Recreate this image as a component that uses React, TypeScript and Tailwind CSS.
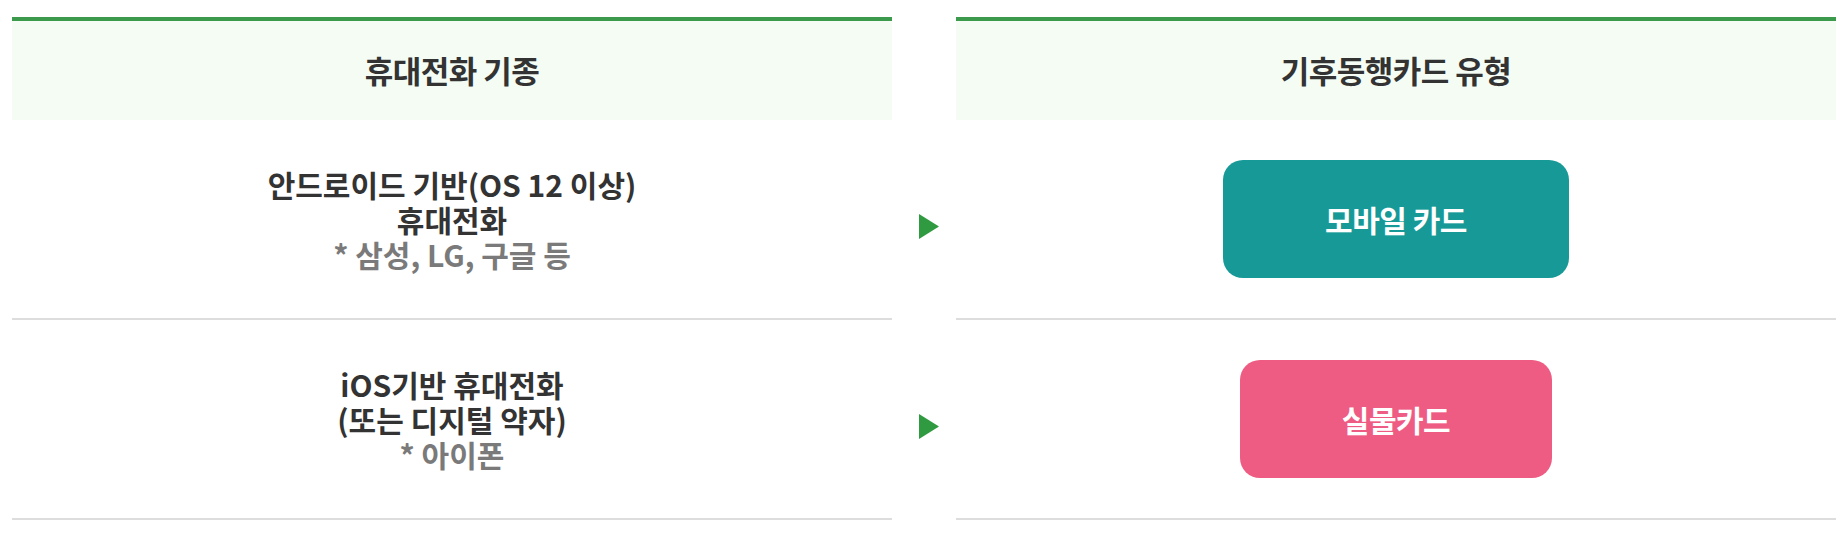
import React from "react"

const rows = [
  {
    lines: ["안드로이드 기반(OS 12 이상)", "휴대전화"],
    note: "* 삼성, LG, 구글 등",
    card: "모바일 카드",
    color: "bg-[#179a97]",
  },
  {
    lines: ["iOS기반 휴대전화", "(또는 디지털 약자)"],
    note: "* 아이폰",
    card: "실물카드",
    color: "bg-[#ee5c83]",
  },
]

function Arrow() {
  return (
    <svg width="20" height="25" viewBox="0 0 20 25" className="mt-3 ml-[10px]">
      <polygon points="0,0 20,12.5 0,25" fill="#2f9a3f" />
    </svg>
  )
}

export default function App() {
  return (
    <div
      className="min-h-[544px] bg-white pt-[17px] pl-[12px]"
      style={{ fontFamily: '"Noto Sans CJK KR", "Noto Sans", sans-serif' }}
    >
      <div className="grid grid-cols-[880px_64px_880px]">
        {/* header */}
        <div className="flex h-[103px] items-center justify-center border-t-4 border-[#3b9a4b] bg-[#f4fcf4]">
          <h3 className="text-[31px] font-bold tracking-[-0.5px] text-[#333]">휴대전화 기종</h3>
        </div>
        <div />
        <div className="flex h-[103px] items-center justify-center border-t-4 border-[#3b9a4b] bg-[#f4fcf4]">
          <h3 className="text-[31px] font-bold tracking-[-0.5px] text-[#333]">기후동행카드 유형</h3>
        </div>

        {rows.map((row, i) => (
          <React.Fragment key={i}>
            <div className="flex h-[200px] items-center justify-center border-b-2 border-[#dddddd] text-center text-[30px] font-bold leading-[35px] text-[#333]">
              <p>
                {row.lines.map((l) => (
                  <React.Fragment key={l}>
                    {l}
                    <br />
                  </React.Fragment>
                ))}
                <span className="text-[#7a7a7a]">{row.note}</span>
              </p>
            </div>
            <div className="flex h-[200px] items-center justify-center">
              <Arrow />
            </div>
            <div className="flex h-[200px] items-center justify-center border-b-2 border-[#dddddd]">
              <div
                className={`flex h-[118px] items-center rounded-[20px] px-[102px] text-[30px] font-bold tracking-[-0.5px] text-white ${row.color}`}
              >
                {row.card}
              </div>
            </div>
          </React.Fragment>
        ))}
      </div>
    </div>
  )
}
